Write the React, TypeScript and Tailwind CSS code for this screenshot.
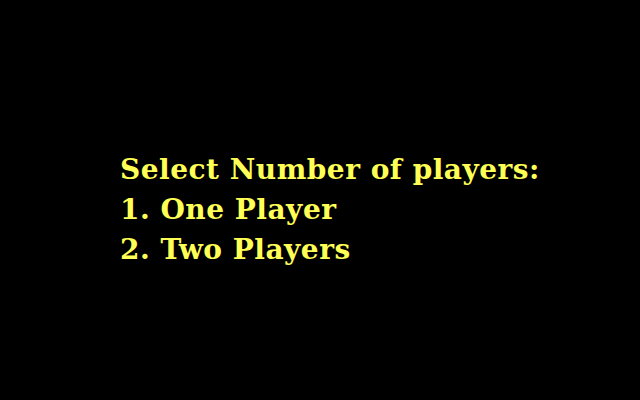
export default function App() {
    const lines = ["Select Number of players:", "1. One Player", "2. Two Players"]

    return (
        <div className="w-[640px] h-[400px] bg-black flex flex-col justify-center pl-[120px] pt-[20px]">
            {lines.map((line, key) => (
                <p
                    key={key}
                    className="text-[#ffff55] font-bold text-[28px] leading-[40px] tracking-[0.5px] whitespace-pre"
                    style={{ fontFamily: '"DejaVu Serif", serif' }}
                >
                    {line}
                </p>
            ))}
        </div>
    )
}
